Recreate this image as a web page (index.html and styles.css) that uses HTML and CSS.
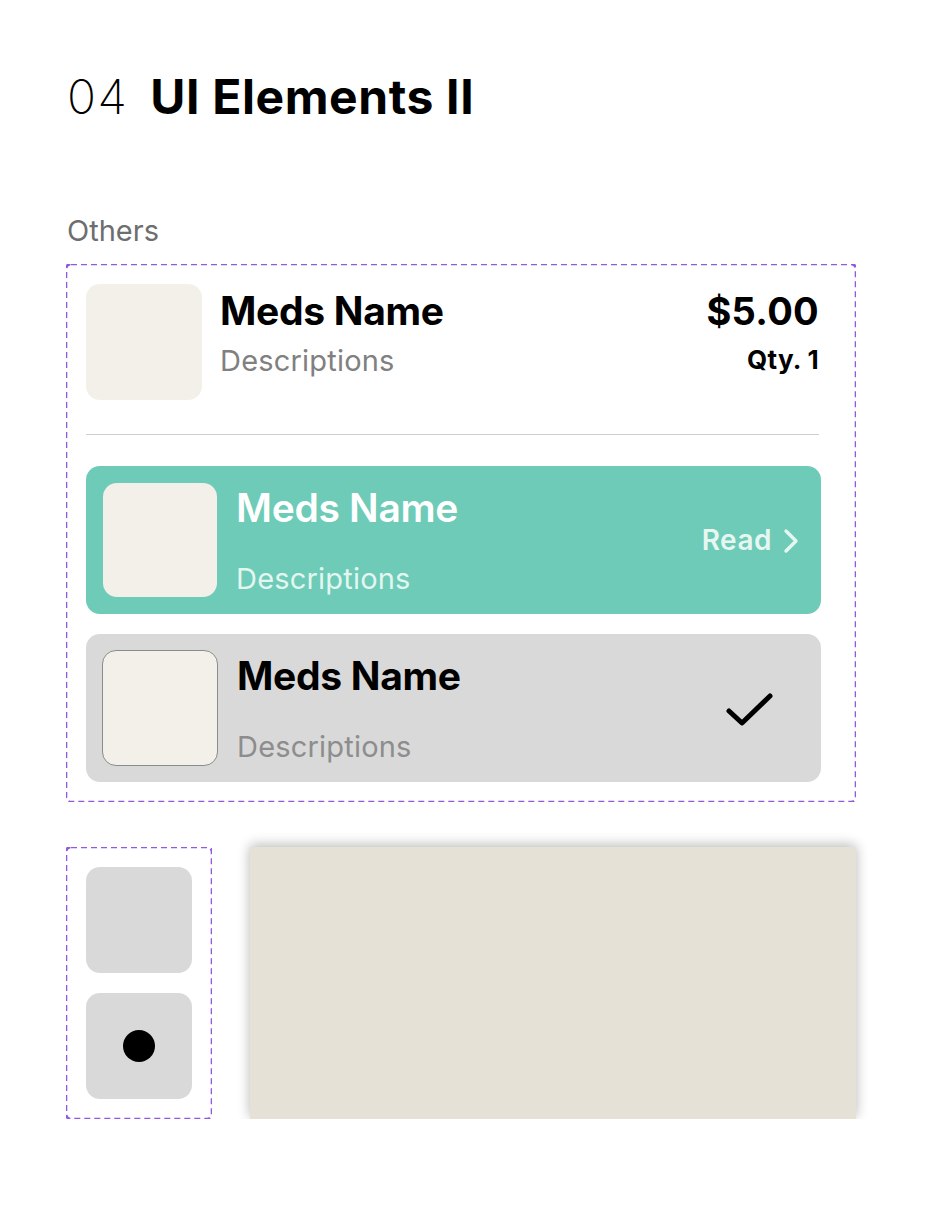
FILE: index.html
```html
<!DOCTYPE html>
<html>
<head>
<meta charset="utf-8">
<link rel="stylesheet" href="styles.css">
</head>
<body>
<div class="page">
  <h1 class="title"><span class="num">04</span><span class="name">UI Elements II</span></h1>
  <div class="label">Others</div>
  <div class="dash-box main">
    <div class="row">
      <div class="thumb"></div>
      <div class="info">
        <div class="t-name">Meds Name</div>
        <div class="t-desc">Descriptions</div>
      </div>
      <div class="price">
        <div class="amount">$5.00</div>
        <div class="qty">Qty. 1</div>
      </div>
    </div>
    <div class="divider"></div>
    <div class="card green">
      <div class="thumb sm"></div>
      <div class="info col">
        <div class="t-name">Meds Name</div>
        <div class="t-desc">Descriptions</div>
      </div>
      <div class="read">Read
        <svg class="chev" width="18" height="26" viewBox="0 0 18 26"><path d="M4 3 L14 13 L4 23" fill="none" stroke="currentColor" stroke-width="3.4" stroke-linecap="round" stroke-linejoin="round"/></svg>
      </div>
    </div>
    <div class="card gray">
      <div class="thumb sm bordered"></div>
      <div class="info col">
        <div class="t-name">Meds Name</div>
        <div class="t-desc">Descriptions</div>
      </div>
      <svg class="check" width="50" height="36" viewBox="0 0 50 36"><path d="M5 20 L18 32 L46 5" fill="none" stroke="#000" stroke-width="5" stroke-linecap="round" stroke-linejoin="round"/></svg>
    </div>
  </div>
  <div class="bottom">
    <div class="dash-box toggles">
      <div class="tile"></div>
      <div class="tile"><span class="dot"></span></div>
    </div>
    <div class="panel"></div>
  </div>
</div>
</body>
</html>
```
FILE: styles.css
```css
* { box-sizing: border-box; }
html, body { margin: 0; padding: 0; background: #fff; }
body { font-family: "Inter", "Liberation Sans", sans-serif; color: #000; }
.page { width: 944px; height: 1220px; padding: 66px 88px 0 66px; overflow: hidden; }
.title { margin: 0; font-size: 48px; line-height: 62px; font-weight: 700; letter-spacing: 0.6px; display: flex; align-items: baseline; }
.title .num { font-weight: 200; margin-right: 22px; padding-left: 1px; letter-spacing: 1.5px; }
.label { margin-top: 85px; font-size: 29px; line-height: 36px; color: #6e6e6e; padding-left: 1px; }
.dash-box {
  background-image: url("data:image/svg+xml,%3csvg xmlns='http://www.w3.org/2000/svg'%3e%3crect x='0' y='0' width='100%25' height='100%25' fill='none' rx='5' ry='5' stroke='%239158E0' stroke-width='2.6' stroke-dasharray='6%2c4'/%3e%3c/svg%3e");
  background-repeat: no-repeat;
  background-size: 100% 100%;
}
.main { margin-top: 15px; padding: 20px 37px 20px 20px; display: flex; flex-direction: column; }
.row { display: flex; align-items: flex-start; }
.thumb { width: 116px; height: 116px; background: #f2f0e9; border-radius: 14px; flex: none; }
.info { margin-left: 18px; flex: 1; }
.t-name { font-size: 39px; font-weight: 700; line-height: 46px; letter-spacing: -0.3px; }
.row .info { padding-top: 4px; }
.t-desc { font-size: 29px; line-height: 36px; color: #808080; margin-top: 9px; letter-spacing: 0.2px; }
.price { text-align: right; padding-top: 4px; }
.amount { font-size: 38px; font-weight: 700; line-height: 46px; letter-spacing: 0.3px; }
.qty { font-size: 26px; font-weight: 700; line-height: 34px; margin-top: 9px; letter-spacing: 0.3px; }
.divider { height: 1px; background: #cfcfcf; margin: 34px 0 31px; }
.card { height: 148px; border-radius: 14px; display: flex; align-items: center; padding: 0 20px 0 17px; margin-right: -2px; }
.card + .card { margin-top: 20px; }
.green { background: #6dcbb7; color: #fff; }
.gray { background: #d9d9d9; }
.thumb.sm { width: 114px; height: 114px; }
.bordered { border: 1px solid #8c8c8c; width: 116px !important; height: 116px !important; margin-left: -1px; }
.col { display: flex; flex-direction: column; justify-content: space-between; height: 114px; margin-left: 19px; padding: 2px 0 0; }
.col .t-name { font-weight: 600; }
.gray .col .t-name { font-weight: 700; }
.green .t-desc { color: #e3f6f0; margin: 0; }
.gray .t-desc { color: #8d8d8d; margin: 0; }
.read { display: flex; align-items: center; gap: 10px; font-size: 28px; font-weight: 600; color: #e6f7f2; letter-spacing: 0.5px; margin-right: 1px; }
.chev { margin-top: 1px; }
.check { margin-right: 27px; margin-top: 2px; }
.bottom { display: flex; gap: 38px; margin-top: 45px; }
.toggles { width: 146px; height: 272px; padding: 20px; display: flex; flex-direction: column; gap: 20px; }
.tile { width: 106px; height: 106px; background: #d9d9d9; border-radius: 14px; display: flex; align-items: center; justify-content: center; }
.dot { width: 32px; height: 32px; border-radius: 50%; background: #000; }
.panel { flex: 1; height: 272px; background: #e5e1d7; box-shadow: 0 -3px 12px rgba(0,0,0,0.18), 0 0 12px rgba(0,0,0,0.12); clip-path: inset(-20px -20px 0 -20px); }
```
